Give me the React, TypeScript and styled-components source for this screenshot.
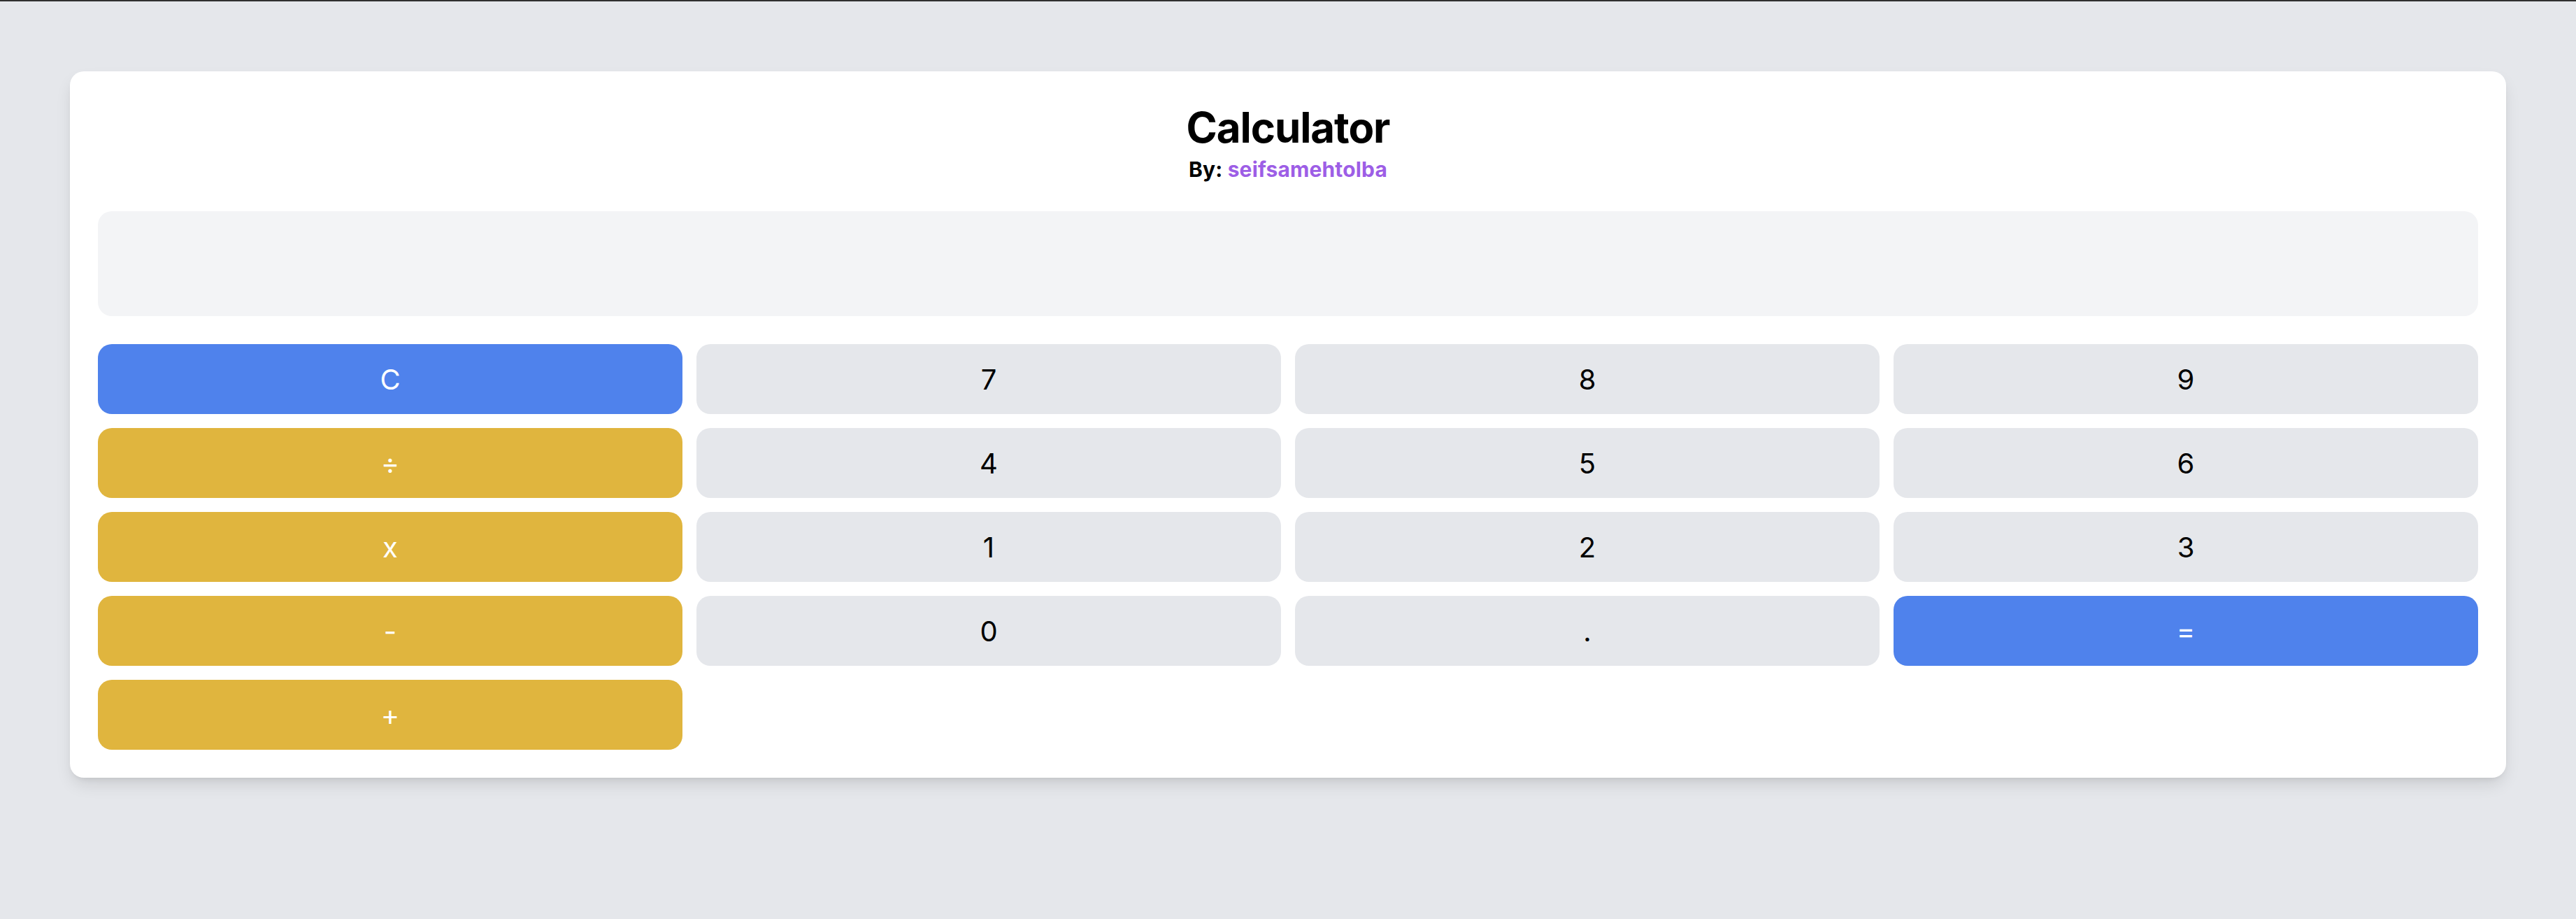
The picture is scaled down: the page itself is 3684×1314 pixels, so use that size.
import React from "react";
import styled, { createGlobalStyle } from "styled-components";

const GlobalStyle = createGlobalStyle`
  html, body {
    margin: 0;
    padding: 0;
  }
  body {
    background: #e5e7eb;
    border-top: 2px solid #303030;
    min-height: 1312px;
    font-family: Inter, "Noto Sans", "Liberation Sans", sans-serif;
    -webkit-font-smoothing: antialiased;
  }
  * { box-sizing: border-box; }
`;

const Page = styled.main`
  padding: 100px 100px 0;
`;

const Card = styled.section`
  background: #ffffff;
  border-radius: 20px;
  padding: 40px;
  box-shadow: 0 12px 24px -4px rgba(0, 0, 0, 0.12), 0 5px 10px -5px rgba(0, 0, 0, 0.1);
`;

const Header = styled.header`
  display: flex;
  flex-direction: column;
  align-items: center;
  margin-bottom: 40px;
`;

const Title = styled.h1`
  margin: 0;
  font-size: 60px;
  line-height: 80px;
  font-weight: 700;
  color: #000;
  letter-spacing: -1.1px;
`;

const Byline = styled.p`
  margin: 0;
  font-size: 30px;
  line-height: 40px;
  font-weight: 700;
  color: #000;
  letter-spacing: 0.15px;
`;

const Author = styled.span`
  color: #9d5ee6;
`;

const Display = styled.div`
  height: 150px;
  background: #f3f4f6;
  border-radius: 20px;
  margin-bottom: 40px;
`;

const Keypad = styled.div`
  display: grid;
  grid-template-columns: repeat(4, 1fr);
  grid-auto-rows: 100px;
  gap: 20px;
`;

type Variant = "num" | "op" | "action";

const bg: Record<Variant, string> = {
  num: "#e5e7eb",
  op: "#e0b53e",
  action: "#4f82ec",
};

const Key = styled.button<{ $variant: Variant }>`
  border: none;
  border-radius: 20px;
  background: ${(p) => bg[p.$variant]};
  color: ${(p) => (p.$variant === "num" ? "#000" : "#fff")};
  font-family: Inter, "Noto Sans", "Liberation Sans", sans-serif;
  font-size: 40px;
  font-weight: 400;
  display: flex;
  align-items: center;
  justify-content: center;
  padding: 0;
  cursor: pointer;
`;

const keys: { label: string; variant: Variant }[] = [
  { label: "C", variant: "action" },
  { label: "7", variant: "num" },
  { label: "8", variant: "num" },
  { label: "9", variant: "num" },
  { label: "÷", variant: "op" },
  { label: "4", variant: "num" },
  { label: "5", variant: "num" },
  { label: "6", variant: "num" },
  { label: "x", variant: "op" },
  { label: "1", variant: "num" },
  { label: "2", variant: "num" },
  { label: "3", variant: "num" },
  { label: "-", variant: "op" },
  { label: "0", variant: "num" },
  { label: ".", variant: "num" },
  { label: "=", variant: "action" },
  { label: "+", variant: "op" },
];

export default function App() {
  return (
    <>
      <GlobalStyle />
      <Page>
        <Card>
          <Header>
            <Title>Calculator</Title>
            <Byline>
              By: <Author>seifsamehtolba</Author>
            </Byline>
          </Header>
          <Display />
          <Keypad>
            {keys.map((k) => (
              <Key key={k.label} $variant={k.variant}>
                {k.label}
              </Key>
            ))}
          </Keypad>
        </Card>
      </Page>
    </>
  );
}
